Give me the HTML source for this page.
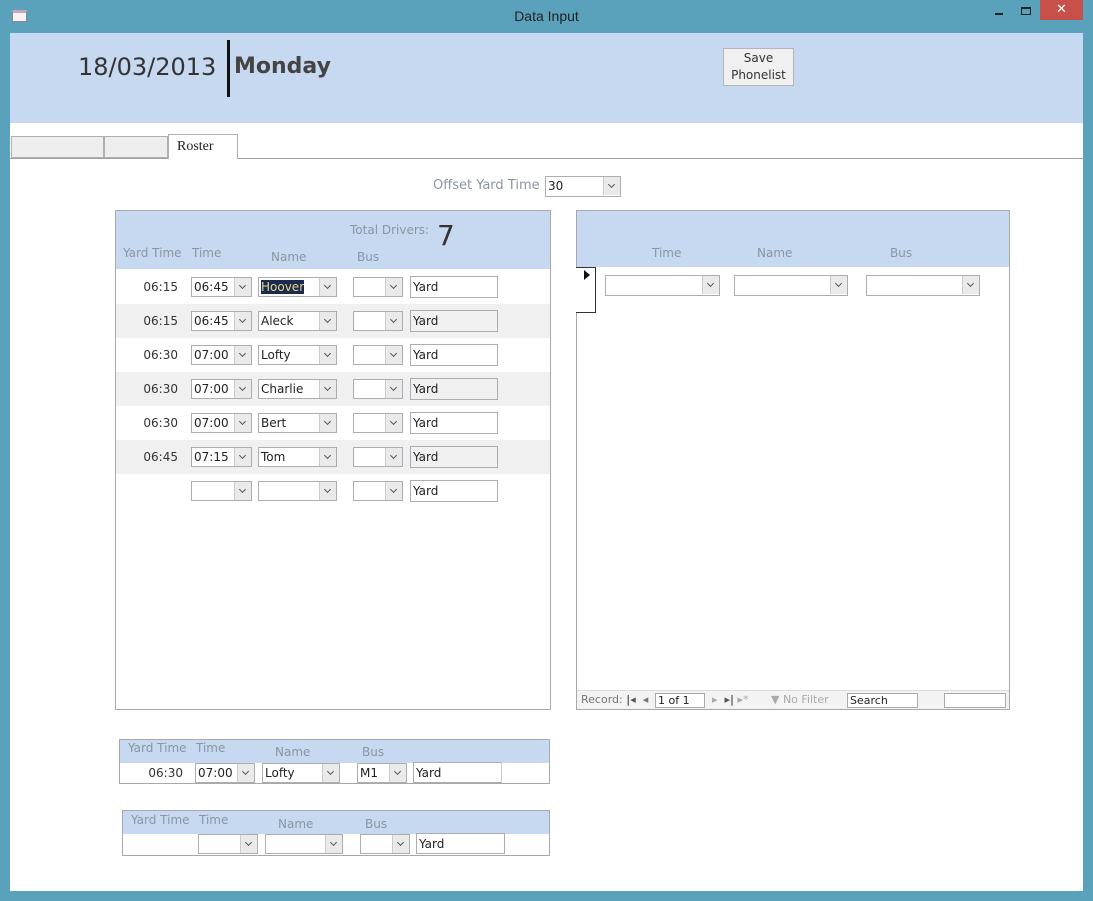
<!DOCTYPE html>
<html><head><meta charset="utf-8"><style>
*{box-sizing:border-box;margin:0;padding:0}
body{width:1093px;height:901px;background:#5aa2bb;position:relative;overflow:hidden;font-family:"DejaVu Sans","Liberation Sans",sans-serif;font-size:12px;color:#333}
.a{position:absolute}
.cb{position:absolute;height:20px;border:1px solid #abadb3;background:#fff;font-size:12px;line-height:18px;padding-left:2px;color:#222}
.cb .btn{position:absolute;right:0;top:0;width:17px;height:18px;background:#eaeaea;border-left:1px solid #ccc}
.cb .btn:after{content:"";position:absolute;left:5px;top:5px;width:4px;height:4px;border-right:1.5px solid #555;border-bottom:1.5px solid #555;transform:rotate(45deg)}
.tb{position:absolute;height:22px;border:1px solid #abadb3;background:#fff;font-size:12px;line-height:20px;padding-left:2px;color:#222}
.lbl{position:absolute;color:#8a95a3;font-size:12px}
.yt{position:absolute;font-size:12px;color:#333;text-align:right;width:60px}
</style></head><body>
<div class="a" style="left:12px;top:10px;width:15px;height:12px;background:#f4f4f4;border:1px solid #888;border-top:3px solid #c9a6c0"></div>
<div class="a" style="left:0;top:8px;width:1093px;text-align:center;font-size:14px;color:#222;font-family:'Liberation Sans',sans-serif">Data Input</div>
<div class="a" style="left:995px;top:13px;width:8px;height:2px;background:#222"></div>
<div class="a" style="left:1021px;top:7px;width:10px;height:8px;border:1px solid #222;border-top-width:2px"></div>
<div class="a" style="left:1040px;top:0;width:43px;height:20px;background:#c7504b;color:#fff;text-align:center;font-size:13px;line-height:20px">✕</div>
<div class="a" style="left:10px;top:33px;width:1073px;height:858px;background:#fff"></div>
<div class="a" style="left:10px;top:33px;width:1073px;height:90px;background:#c6d9f0"></div>
<div class="a" style="left:78px;top:53px;font-size:24px;color:#333">18/03/2013</div>
<div class="a" style="left:227px;top:40px;width:3px;height:57px;background:#111"></div>
<div class="a" style="left:234px;top:54px;font-size:22px;font-weight:bold;color:#444">Monday</div>
<div class="a" style="left:723px;top:48px;width:71px;height:38px;background:#f0f0f0;border:1px solid #b5b5b5;text-align:center;font-size:12px;line-height:17px;padding-top:1px">Save<br>Phonelist</div>
<div class="a" style="left:10px;top:158px;width:1073px;height:1px;background:#a0a0a0"></div>
<div class="a" style="left:11px;top:136px;width:93px;height:22px;background:#eee;border:1px solid #b0b0b0"></div>
<div class="a" style="left:104px;top:136px;width:64px;height:22px;background:#eee;border:1px solid #b0b0b0"></div>
<div class="a" style="left:168px;top:134px;width:70px;height:25px;background:#fff;border:1px solid #b0b0b0;border-bottom:none;font-family:'Liberation Serif',serif;font-size:14px;padding:4px 0 0 8px;color:#222">Roster</div>
<div class="lbl" style="left:433px;top:178px;font-size:13px">Offset Yard Time</div>
<div class="cb" style="left:545px;top:176px;width:76px;height:21px">30<div class="btn"></div></div>
<div class="a" style="left:115px;top:210px;width:436px;height:500px;border:1px solid #a8a8a8;background:#fff"></div>
<div class="a" style="left:116px;top:211px;width:434px;height:58px;background:#c6d9f0"></div>
<div class="lbl" style="left:350px;top:223px">Total Drivers:</div>
<div class="a" style="left:437px;top:219px;font-size:28px;color:#333">7</div>
<div class="lbl" style="left:123px;top:246px">Yard Time</div>
<div class="lbl" style="left:192px;top:246px">Time</div>
<div class="lbl" style="left:271px;top:250px">Name</div>
<div class="lbl" style="left:357px;top:250px">Bus</div>
<div id="rows"></div>
<div class="a" style="left:576px;top:210px;width:434px;height:500px;border:1px solid #a8a8a8;background:#fff"></div>
<div class="a" style="left:577px;top:211px;width:432px;height:56px;background:#c6d9f0"></div>
<div class="lbl" style="left:652px;top:246px">Time</div>
<div class="lbl" style="left:757px;top:246px">Name</div>
<div class="lbl" style="left:890px;top:246px">Bus</div>
<div class="a" style="left:576px;top:267px;width:20px;height:46px;border:1px solid #333;border-left:none;background:#fff"></div>
<div class="a" style="left:584px;top:270px;width:0;height:0;border-left:6px solid #111;border-top:5px solid transparent;border-bottom:5px solid transparent"></div>
<div class="cb" style="left:605px;top:275px;width:115px;height:21px"><div class="btn"></div></div>
<div class="cb" style="left:734px;top:275px;width:114px;height:21px"><div class="btn"></div></div>
<div class="cb" style="left:866px;top:275px;width:114px;height:21px"><div class="btn"></div></div>
<div class="a" style="left:577px;top:690px;width:432px;height:19px;background:#f3f3f3;border-top:1px solid #ddd;font-size:11px;color:#777;line-height:18px">
<span class="a" style="left:4px">Record: <b style="color:#555">|◂</b> &nbsp;◂</span>
<span class="a" style="left:78px;top:2px;width:50px;height:15px;background:#fff;border:1px solid #aaa;line-height:13px;color:#222;padding-left:2px">1 of 1</span>
<span class="a" style="left:135px;color:#aaa">▸ &nbsp;<b style="color:#555">▸|</b> ▸*</span>
<span class="a" style="left:194px;color:#aaa">▼ No Filter</span>
<span class="a" style="left:270px;top:2px;width:71px;height:15px;background:#fff;border:1px solid #aaa;line-height:13px;color:#222;padding-left:2px">Search</span>
<span class="a" style="left:367px;top:2px;width:62px;height:15px;background:#fff;border:1px solid #aaa"></span>
</div>
<div class="a" style="left:119px;top:739px;width:431px;height:45px;border:1px solid #a8a8a8;background:#fff"></div>
<div class="a" style="left:120px;top:740px;width:429px;height:23px;background:#c6d9f0"></div>
<div class="lbl" style="left:128px;top:741px">Yard Time</div><div class="lbl" style="left:196px;top:741px">Time</div>
<div class="lbl" style="left:275px;top:745px">Name</div><div class="lbl" style="left:362px;top:745px">Bus</div>
<div class="yt" style="left:123px;top:766px">06:30</div>
<div class="cb" style="left:195px;top:763px;width:60px"><span>07:00</span><div class="btn"></div></div>
<div class="cb" style="left:262px;top:763px;width:78px">Lofty<div class="btn"></div></div>
<div class="cb" style="left:357px;top:763px;width:50px">M1<div class="btn"></div></div>
<div class="tb" style="left:413px;top:762px;width:89px;height:21px">Yard</div>
<div class="a" style="left:501px;top:762px;width:1px;height:21px;background:#ccc"></div>
<div class="a" style="left:122px;top:810px;width:428px;height:46px;border:1px solid #a8a8a8;background:#fff"></div>
<div class="a" style="left:123px;top:811px;width:426px;height:23px;background:#c6d9f0"></div>
<div class="lbl" style="left:131px;top:813px">Yard Time</div><div class="lbl" style="left:199px;top:813px">Time</div>
<div class="lbl" style="left:278px;top:817px">Name</div><div class="lbl" style="left:365px;top:817px">Bus</div>
<div class="cb" style="left:198px;top:834px;width:60px"><div class="btn"></div></div>
<div class="cb" style="left:265px;top:834px;width:78px"><div class="btn"></div></div>
<div class="cb" style="left:360px;top:834px;width:50px"><div class="btn"></div></div>
<div class="tb" style="left:416px;top:833px;width:89px;height:21px">Yard</div>
<script>
var d=[["06:15","06:45","Hoover"],["06:15","06:45","Aleck"],["06:30","07:00","Lofty"],["06:30","07:00","Charlie"],["06:30","07:00","Bert"],["06:45","07:15","Tom"],["","",""]];
var h="";
d.forEach(function(r,i){var y=270+i*34;
if(i%2==1)h+='<div class="a" style="left:116px;top:'+y+'px;width:434px;height:34px;background:#f0f0f0"></div>';
h+='<div class="yt" style="left:118px;top:'+(y+10)+'px">'+r[0]+'</div>';
h+='<div class="cb" style="left:191px;top:'+(y+7)+'px;width:61px">'+r[1]+'<div class="btn"></div></div>';
var nm=i==0?'<span style="background:#1b2b4d;color:#e8d58a">Hoover</span>':r[2];
h+='<div class="cb" style="left:258px;top:'+(y+7)+'px;width:79px">'+nm+'<div class="btn"></div></div>';
h+='<div class="cb" style="left:353px;top:'+(y+7)+'px;width:50px"><div class="btn"></div></div>';
h+='<div class="tb" style="left:410px;top:'+(y+6)+'px;width:88px;background:'+(i%2==1?'#f0f0f0':'#fff')+'">Yard</div>';});
document.getElementById("rows").innerHTML=h;
</script>
</body></html>
